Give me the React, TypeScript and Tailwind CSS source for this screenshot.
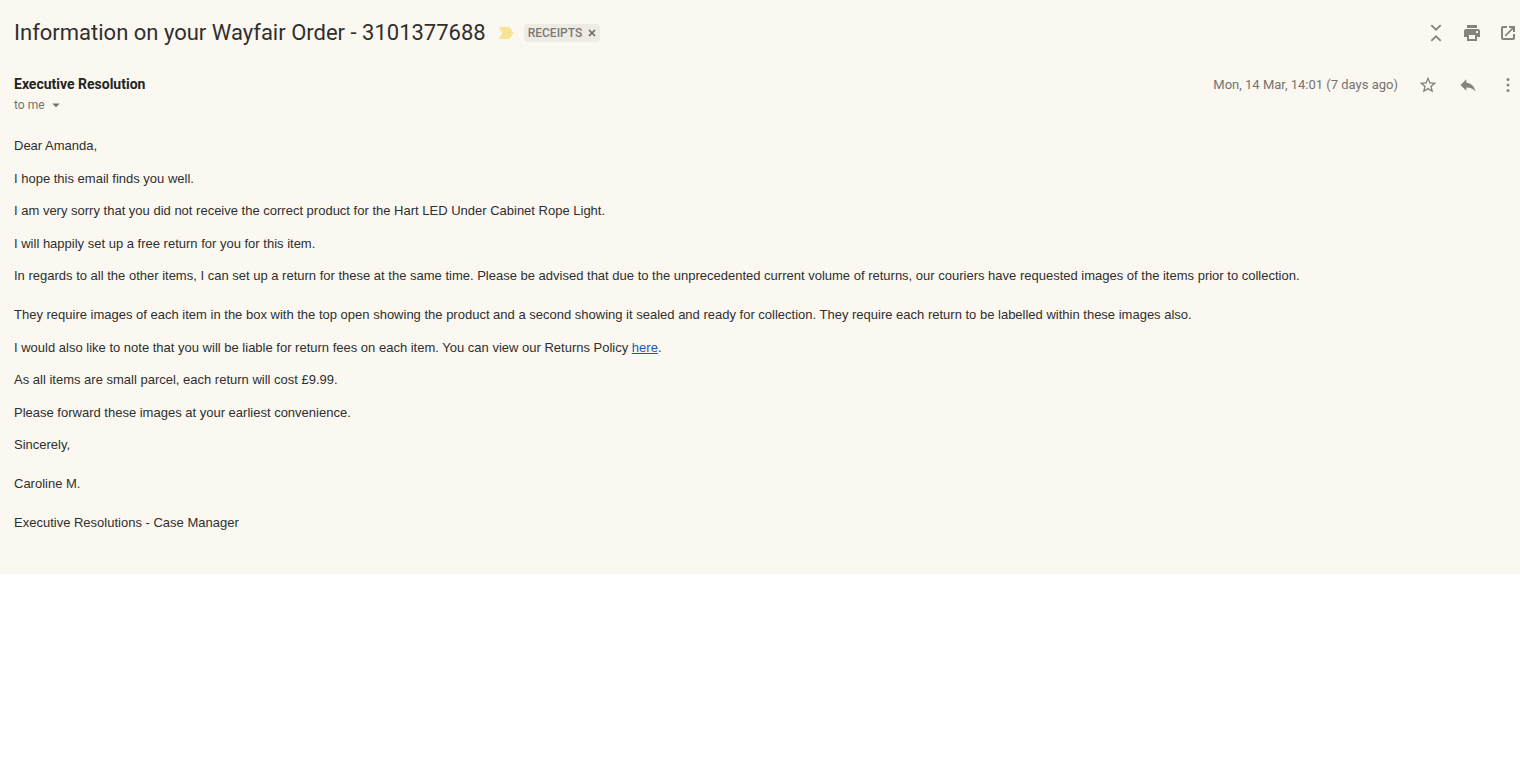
import React from "react";
import { MdArrowDropDown, MdReply, MdStarBorder } from "react-icons/md";

interface IconButtonProps {
  label: string;
  children: React.ReactNode;
}

const IconButton: React.FC<IconButtonProps> = ({ label, children }) => (
  <button
    type="button"
    aria-label={label}
    className="flex h-5 w-5 shrink-0 items-center justify-center text-[#85837f]"
  >
    {children}
  </button>
);

const CollapseIcon = () => (
  <svg width="20" height="20" viewBox="0 0 20 20" fill="none">
    <path
      d="M5.3 2.1 10 6.7 14.7 2.1M5.3 17.9 10 13.3 14.7 17.9"
      stroke="currentColor"
      strokeWidth="1.8"
    />
  </svg>
);

const PrintIcon = () => (
  <svg width="20" height="20" viewBox="0 0 20 20" fill="currentColor" fillRule="evenodd">
    <path d="M5 2h10v3H5z" />
    <path d="M4 6h12a2 2 0 0 1 2 2v6h-3v4H5v-4H2V8a2 2 0 0 1 2-2zm3 6v4h6v-4zM14 8v2h2V8z" />
  </svg>
);

const NewWindowIcon = () => (
  <svg width="20" height="20" viewBox="0 0 20 20" fill="none" stroke="currentColor" strokeWidth="2">
    <path d="M9 4H5a1 1 0 0 0-1 1v10a1 1 0 0 0 1 1h10a1 1 0 0 0 1-1v-4" />
    <path d="M11 4h5v5" />
    <path d="M15.7 4.3 7.2 12.8" strokeWidth="1.7" />
  </svg>
);

const MoreIcon = () => (
  <svg width="20" height="20" viewBox="0 0 20 20" fill="currentColor">
    <circle cx="10" cy="4.4" r="1.5" />
    <circle cx="10" cy="10" r="1.5" />
    <circle cx="10" cy="15.6" r="1.5" />
  </svg>
);

const ImportanceMarker = () => (
  <svg width="16" height="12" viewBox="0 0 16 12">
    <path d="M.5 0H10.5Q11.5 0 12 .8L15.5 6 12 11.2Q11.5 12 10.5 12H.5L4.5 6Z" fill="#f6e394" />
  </svg>
);

const SubjectBar = () => (
  <header className="flex items-center justify-between">
    <div className="flex items-center">
      <h1 className="text-[22px] leading-7 text-[#2f2f2e]">
        Information on your Wayfair Order - 3101377688
      </h1>
      <button type="button" aria-label="Important" className="ml-3">
        <ImportanceMarker />
      </button>
      <span className="ml-[10px] flex h-[18px] items-center rounded bg-[#eeebe5] px-1 text-xs font-medium text-[#7b7976]">
        RECEIPTS
        <button type="button" aria-label="Remove label" className="ml-[6px]">
          <svg width="8" height="8" viewBox="0 0 8 8" stroke="#6b6966" strokeWidth="1.7">
            <path d="M1 1 7 7M7 1 1 7" />
          </svg>
        </button>
      </span>
    </div>
    <div className="flex items-center gap-4">
      <IconButton label="Collapse all">
        <CollapseIcon />
      </IconButton>
      <IconButton label="Print all">
        <PrintIcon />
      </IconButton>
      <IconButton label="In new window">
        <NewWindowIcon />
      </IconButton>
    </div>
  </header>
);

const MessageHeader = () => (
  <div className="mt-7 flex items-start justify-between">
    <div>
      <h2 className="text-sm leading-[18px] font-bold text-[#242423]">Executive Resolution</h2>
      <button type="button" className="flex items-center text-xs leading-6 text-[#757370]">
        to me
        <MdArrowDropDown size={18} className="ml-[2px]" />
      </button>
    </div>
    <div className="flex items-center gap-5">
      <time className="text-[13px] leading-5 text-[#757370]">Mon, 14 Mar, 14:01 (7 days ago)</time>
      <IconButton label="Star">
        <MdStarBorder size={20} />
      </IconButton>
      <IconButton label="Reply">
        <MdReply size={20} />
      </IconButton>
      <IconButton label="More">
        <MoreIcon />
      </IconButton>
    </div>
  </div>
);

const MessageBody = () => (
  <div className="mt-[19px] flex flex-col gap-[13px] font-['Liberation_Sans',Arial,sans-serif] text-[13px] leading-normal text-[#2f2f2e]">
    <p>Dear Amanda,</p>
    <p>I hope this email finds you well.</p>
    <p>
      I am very sorry that you did not receive the correct product for the Hart LED Under Cabinet
      Rope Light.
    </p>
    <p>I will happily set up a free return for you for this item.</p>
    <p>
      In regards to all the other items, I can set up a return for these at the same time. Please be
      advised that due to the unprecedented current volume of returns, our couriers have requested
      images of the items prior to collection.
      <br />
      <br />
      They require images of each item in the box with the top open showing the product and a second
      showing it sealed and ready for collection. They require each return to be labelled within
      these images also.
    </p>
    <p>
      I would also like to note that you will be liable for return fees on each item. You can view
      our Returns Policy{" "}
      <a href="#returns" className="text-[#1a55c4] underline">
        here
      </a>
      .
    </p>
    <p>As all items are small parcel, each return will cost £9.99.</p>
    <p>Please forward these images at your earliest convenience.</p>
    <p>
      Sincerely,
      <br />
      <br />
      Caroline M.
      <br />
      <br />
      Executive Resolutions - Case Manager
    </p>
  </div>
);

const App: React.FC = () => (
  <main className="bg-[#fbf8f1] pt-[19px] pr-[2px] pb-[41px] pl-[14px] font-['Roboto',sans-serif]">
    <SubjectBar />
    <MessageHeader />
    <MessageBody />
  </main>
);

export default App;
